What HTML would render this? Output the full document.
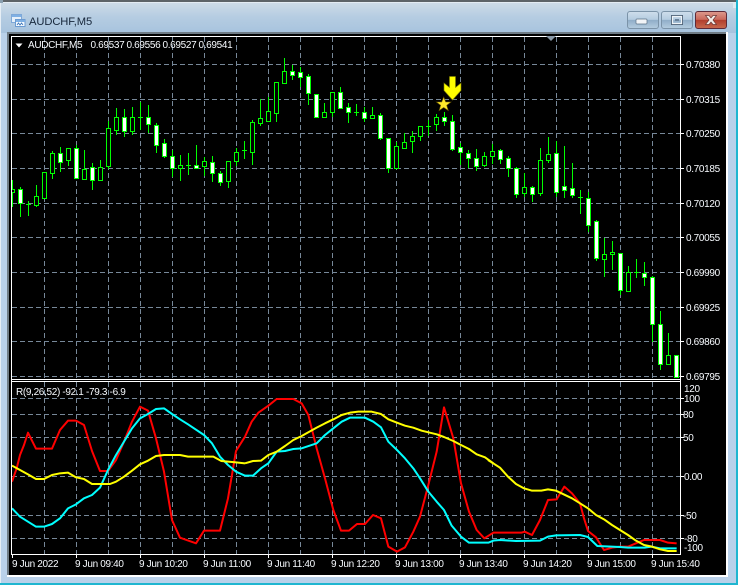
<!DOCTYPE html>
<html><head><meta charset="utf-8"><style>
html,body{margin:0;padding:0;background:#1fb6d0;overflow:hidden}
svg{display:block}
text{font-family:"Liberation Sans",sans-serif;font-size:10px;letter-spacing:-.33px;fill:#f8fbff}
</style></head><body>
<svg width="738" height="585" viewBox="0 0 738 585" xmlns="http://www.w3.org/2000/svg">
<defs>
<linearGradient id="tb" x1="0" y1="0" x2="0" y2="1"><stop offset="0" stop-color="#d3dfe9"/><stop offset=".5" stop-color="#b6cde2"/><stop offset="1" stop-color="#a7c3de"/></linearGradient>
<linearGradient id="bt" x1="0" y1="0" x2="0" y2="1"><stop offset="0" stop-color="#cfdeec"/><stop offset=".48" stop-color="#b4cce0"/><stop offset=".5" stop-color="#8fadc8"/><stop offset="1" stop-color="#b5cde0"/></linearGradient>
<linearGradient id="cl" x1="0" y1="0" x2="0" y2="1"><stop offset="0" stop-color="#dd9a8e"/><stop offset=".48" stop-color="#c9685a"/><stop offset=".5" stop-color="#b13d2c"/><stop offset="1" stop-color="#c86a4e"/></linearGradient>
<clipPath id="main"><rect x="12" y="37" width="668" height="342"/></clipPath>
<clipPath id="ind"><rect x="12" y="382" width="668" height="172"/></clipPath>
</defs>

<!-- window frame -->
<rect width="738" height="585" fill="#1fb6d0"/>
<rect x="0" y="0" width="736" height="583" fill="#b9d1ea"/>
<rect x="0" y="0" width="738" height="33" fill="url(#tb)"/>
<rect x="0" y="0" width="738" height="2" fill="#5e6468"/>
<rect x="0" y="2" width="738" height="1" fill="#e4ecf3"/>
<rect x="0" y="3" width="1" height="580" fill="#e6eef5"/>
<rect x="0" y="0" width="3" height="3" fill="#8aa0b0"/>
<rect x="736" y="0" width="2" height="585" fill="#1fb6d0"/>
<rect x="733" y="3" width="3" height="5" fill="#dfe9f1"/>

<!-- title icon -->
<rect x="11.500" y="14.500" width="10" height="8" fill="#e6f0fa" stroke="#7ea8d8"/>
<rect x="12" y="15" width="9" height="2" fill="#7fb0e4"/>
<rect x="15.500" y="19.500" width="9.500" height="7" fill="#f6fafd" stroke="#6b9bd2"/>
<rect x="16" y="20" width="9" height="2" fill="#7fb0e4"/>
<path d="M17 25l1.500-2 1.500 2 1.500-2 1.500 2" fill="none" stroke="#3f78bd" stroke-width=".9"/>
<text x="29" y="25" style="font-size:11.200px;letter-spacing:-.1px;fill:#16263a">AUDCHF,M5</text>

<!-- buttons -->
<rect x="627.500" y="11.500" width="31" height="17" rx="2.500" fill="url(#bt)" stroke="#7b93a8"/>
<rect x="636" y="19" width="11" height="5" rx="1" fill="#f1f4f7" stroke="#5b7186" stroke-width=".7"/>
<rect x="661.500" y="11.500" width="31" height="17" rx="2.500" fill="url(#bt)" stroke="#7b93a8"/>
<rect x="671.500" y="15.500" width="11" height="9" fill="none" stroke="#4e6277" stroke-width="1"/>
<rect x="672.500" y="16.500" width="9" height="7" fill="none" stroke="#eef3f7" stroke-width="1.200"/>
<rect x="675" y="19" width="4" height="2" fill="#6a8199"/>
<rect x="695.500" y="11.500" width="31" height="17" rx="2.500" fill="url(#cl)" stroke="#5e2a38"/>
<path d="M705.500 15.500h3.500l2 2.500 2-2.500h3.500l-3.500 4.500 3.500 4.500h-3.500l-2-2.500-2 2.500h-3.500l3.500-4.500z" fill="#f3ede9" stroke="#6c3a36" stroke-width=".7"/>

<!-- chart well -->
<rect x="7" y="32" width="721" height="545" fill="#fff"/>
<rect x="7" y="32" width="719" height="543" fill="#6f7c86"/>
<rect x="9" y="34" width="717" height="541" fill="#000"/>
<path d="M11.500 36.500H680.500V554.500H11.500zM11.500 379.500H680.500M11.500 381.500H680.500" fill="none" stroke="#fff" stroke-width="1" shape-rendering="crispEdges"/>

<!-- grid -->
<g fill="none" stroke="#778899" stroke-width="1" stroke-dasharray="5 3" shape-rendering="crispEdges">
<path d="M12 64.500H680M12 99.500H680M12 133.500H680M12 168.500H680M12 203.500H680M12 237.500H680M12 272.500H680M12 307.500H680M12 341.500H680M12 376.500H680"/>
<path d="M12 398.500H680M12 414.500H680M12 437.500H680M12 476.500H680M12 515.500H680M12 538.500H680"/>
<path d="M44.500 37V379M76.500 37V379M108.500 37V379M140.500 37V379M172.500 37V379M204.500 37V379M236.500 37V379M268.500 37V379M300.500 37V379M332.500 37V379M364.500 37V379M396.500 37V379M428.500 37V379M460.500 37V379M492.500 37V379M524.500 37V379M556.500 37V379M588.500 37V379M620.500 37V379M652.500 37V379"/>
<path d="M44.500 382V554M76.500 382V554M108.500 382V554M140.500 382V554M172.500 382V554M204.500 382V554M236.500 382V554M268.500 382V554M300.500 382V554M332.500 382V554M364.500 382V554M396.500 382V554M428.500 382V554M460.500 382V554M492.500 382V554M524.500 382V554M556.500 382V554M588.500 382V554M620.500 382V554M652.500 382V554"/>
</g>
<path d="M546 36h10l-5 5z" fill="#8a99a8"/>

<!-- candles -->
<g clip-path="url(#main)" shape-rendering="crispEdges" stroke="#00ff00" stroke-width="1">
<path fill="none" d="M12.500 180V207M20.500 187V217M28.500 201V216M36.500 185V207M44.500 172V198M52.500 151V179M60.500 147V172M68.500 148V166M76.500 145V179M84.500 150V179M92.500 163V190M100.500 160V180M108.500 121V169M116.500 108V135M124.500 109V137M132.500 107V135M140.500 102V130M148.500 105V133M156.500 123V153M164.500 139V158M172.500 150V177M180.500 155V181M188.500 153V175M196.500 145V165M204.500 157V176M212.500 156V182M220.500 171V186M228.500 161V188M236.500 148V166M244.500 141V159M252.500 120V165M260.500 99V126M268.500 97V122M276.500 82V122M284.500 58V83M292.500 65V80M300.500 67V87M308.500 74V105M324.500 103V118M332.500 92V117M340.500 87V109M348.500 103V123M356.500 104V116M364.500 107V122M372.500 107V119M380.500 113V140M388.500 138V173M396.500 142V168M404.500 133V149M412.500 131V153M420.500 126V141M428.500 120V136M436.500 114V131M444.500 112V126M452.500 115V151M460.500 143V165M468.500 150V168M476.500 149V171M484.500 152V167M492.500 144V164M500.500 149V164M508.500 156V177M516.500 167V198M524.500 173V197M532.500 186V202M540.500 148V196M548.500 137V163M556.500 141V197M564.500 146V198M572.500 163V198M580.500 190V214M588.500 192V232M596.500 220V261M604.500 238V277M612.500 241V270M620.500 253V295M628.500 266V292M636.500 259V278M644.500 262V286M652.500 276V342M660.500 311V370M668.500 333V364M26 204.500h5M138 117.500h5M186 165.500h5M242 150.500h5M354 112.500h5M426 126.500h5M578 197.500h5M634 272.500h5"/>
<path fill="#000" d="M10.500 189.500h4v3h-4zM34.500 196.500h4v9h-4zM42.500 172.500h4v26h-4zM50.500 153.500h4v20h-4zM66.500 148.500h4v12h-4zM82.500 169.500h4v10h-4zM98.500 167.500h4v13h-4zM106.500 128.500h4v38h-4zM114.500 117.500h4v13h-4zM130.500 117.500h4v14h-4zM178.500 165.500h4v3h-4zM202.500 161.500h4v5h-4zM226.500 161.500h4v20h-4zM234.500 152.500h4v9h-4zM250.500 122.500h4v30h-4zM258.500 118.500h4v5h-4zM266.500 111.500h4v10h-4zM274.500 82.500h4v31h-4zM282.500 71.500h4v12h-4zM322.500 112.500h4v5h-4zM330.500 92.500h4v20h-4zM370.500 115.500h4v3h-4zM394.500 146.500h4v22h-4zM402.500 142.500h4v6h-4zM410.500 136.500h4v5h-4zM418.500 126.500h4v10h-4zM434.500 117.500h4v7h-4zM482.500 156.500h4v9h-4zM490.500 151.500h4v5h-4zM522.500 187.500h4v6h-4zM538.500 160.500h4v33h-4zM546.500 154.500h4v6h-4zM602.500 254.500h4v5h-4zM610.500 252.500h4v2h-4zM626.500 272.500h4v19h-4zM666.500 355.500h4v9h-4z"/>
<path fill="#fff" d="M18.500 189.500h4v14h-4zM58.500 153.500h4v9h-4zM74.500 148.500h4v30h-4zM90.500 167.500h4v13h-4zM122.500 117.500h4v14h-4zM146.500 117.500h4v7h-4zM154.500 125.500h4v20h-4zM162.500 143.500h4v13h-4zM170.500 156.500h4v12h-4zM194.500 165.500h4v3h-4zM210.500 162.500h4v11h-4zM218.500 173.500h4v9h-4zM290.500 71.500h4v4h-4zM298.500 72.500h4v5h-4zM306.500 76.500h4v17h-4zM314.500 94.500h4v23h-4zM338.500 92.500h4v16h-4zM346.500 107.500h4v5h-4zM362.500 112.500h4v6h-4zM378.500 115.500h4v23h-4zM386.500 138.500h4v30h-4zM442.500 117.500h4v4h-4zM450.500 121.500h4v28h-4zM458.500 147.500h4v5h-4zM466.500 153.500h4v5h-4zM474.500 158.500h4v8h-4zM498.500 150.500h4v9h-4zM506.500 158.500h4v10h-4zM514.500 168.500h4v26h-4zM530.500 187.500h4v7h-4zM554.500 153.500h4v39h-4zM562.500 186.500h4v4h-4zM570.500 188.500h4v7h-4zM586.500 198.500h4v27h-4zM594.500 221.500h4v37h-4zM618.500 253.500h4v37h-4zM642.500 273.500h4v4h-4zM650.500 277.500h4v47h-4zM658.500 324.500h4v40h-4zM674.500 355.500h4v22h-4z"/>
</g>

<!-- arrow and star -->
<path d="M449.500 76.500h6v11l5.500-4.500v7.500l-8.500 9.500-8.500-9.500v-7.500l5.500 4.500z" fill="#ffff00" stroke="#7f7f00" stroke-width=".6"/>
<path d="M443.700 97l2 5h5.300l-4.300 3.300 1.600 5.200-4.600-3-4.600 3 1.600-5.200-4.300-3.300h5.300z" fill="#ffe92a" stroke="#6e5a00" stroke-width=".6"/>

<!-- indicator lines -->
<g clip-path="url(#ind)" fill="none" stroke-width="2" stroke-linejoin="round">
<g transform="translate(0 375) scale(.33333)" stroke-width="6">
<polyline stroke="#ff0000" points="36,320 50,280 60,240 72,210 84,173 108,221 156,221 180,165 204,137 228,137 252,150 276,228 300,288 324,288 348,255 372,200 396,140 420,95 444,107 468,190 492,290 516,435 540,488 588,505 612,467 660,467 684,370 708,228 735,185"/>
</g>
<g transform="translate(245 375) scale(.33333)" stroke-width="6">
<polyline stroke="#ff0000" points="0,185 20,140 40,113 70,92 95,72 145,72 170,85 190,120 215,220 240,310 265,405 288,467 312,467 336,447 360,447 384,420 408,430 430,515 456,530 480,517 505,470 525,425 550,330 575,230 597,97 625,190 648,325 672,410 695,465 718,490 745,473"/>
</g>
<g transform="translate(488 375) scale(.33333)" stroke-width="6">
<polyline stroke="#ff0000" points="14,473 100,473 110,470 132,480 156,435 180,375 206,373 229,335 252,355 276,385 288,430 300,468 324,487 348,525 372,518 396,515 420,515 444,505 468,495 516,495 540,503 566,505"/>
</g>
<g transform="translate(0 375) scale(.33333)" stroke-width="6">
<polyline stroke="#00ffff" points="36,400 60,425 108,455 132,455 156,447 180,430 204,400 228,388 252,370 276,360 300,338 324,285 348,240 372,200 396,160 420,130 444,117 468,102 492,100 516,117 540,133 564,148 612,180 636,205 660,245 684,270 708,290 735,302"/>
</g>
<g transform="translate(245 375) scale(.33333)" stroke-width="6">
<polyline stroke="#00ffff" points="0,302 24,302 48,280 70,265 95,230 120,228 145,222 170,220 215,205 240,180 265,160 290,140 315,128 360,128 385,140 408,157 430,200 456,225 480,250 505,280 525,310 550,350 575,380 597,405 620,452 648,485 672,503 730,503 745,497"/>
</g>
<g transform="translate(488 375) scale(.33333)" stroke-width="6">
<polyline stroke="#00ffff" points="14,497 36,495 84,498 156,497 180,485 204,481 276,480 300,486 328,513 396,516 420,518 470,518 490,515 516,520 566,520"/>
</g>
<g transform="translate(0 375) scale(.33333)" stroke-width="6">
<polyline stroke="#ffff00" points="36,272 60,285 84,298 108,312 132,312 156,300 180,295 204,293 228,307 252,312 276,327 330,327 348,320 372,305 396,287 420,268 444,257 468,243 492,240 540,240 564,245 640,245 664,258 708,262 735,265"/>
</g>
<g transform="translate(245 375) scale(.33333)" stroke-width="6">
<polyline stroke="#ffff00" points="0,265 24,258 48,257 70,240 95,230 120,213 145,195 170,183 215,158 240,145 265,133 290,120 315,113 340,110 380,110 408,117 430,133 456,143 480,152 505,158 530,167 550,172 575,178 597,186 625,198 648,210 672,222 695,238 720,247 745,265"/>
</g>
<g transform="translate(488 375) scale(.33333)" stroke-width="6">
<polyline stroke="#ffff00" points="0,255 36,278 60,305 84,327 108,340 132,347 160,347 180,343 204,347 252,370 276,385 300,400 324,420 348,433 372,450 396,465 420,480 444,497 468,510 492,515 516,523 540,528 566,528"/>
</g>
</g>

<!-- ticks -->
<path d="M681 64.500h3M681 99.500h3M681 133.500h3M681 168.500h3M681 203.500h3M681 237.500h3M681 272.500h3M681 307.500h3M681 341.500h3M681 376.500h3M681 398.500h3M681 414.500h3M681 437.500h3M681 476.500h3M681 515.500h3M681 538.500h3M12.500 555v3M76.500 555v3M140.500 555v3M204.500 555v3M268.500 555v3M332.500 555v3M396.500 555v3M460.500 555v3M524.500 555v3M588.500 555v3M652.500 555v3" stroke="#fff" stroke-width="1" fill="none" shape-rendering="crispEdges"/>

<!-- header -->
<path d="M15.500 43.500h7l-3.500 4z" fill="#fff"/>
<text x="28" y="48">AUDCHF,M5</text>
<text x="90.500" y="48">0.69537</text>
<text x="126.500" y="48">0.69556</text>
<text x="162.500" y="48">0.69527</text>
<text x="198.500" y="48">0.69541</text>
<text x="16" y="395">R(9,26,52) -92.1 -79.3 -6.9</text>

<!-- prices -->
<text x="686" y="68">0.70380</text>
<text x="686" y="103">0.70315</text>
<text x="686" y="137">0.70250</text>
<text x="686" y="172">0.70185</text>
<text x="686" y="207">0.70120</text>
<text x="686" y="241">0.70055</text>
<text x="686" y="276">0.69990</text>
<text x="686" y="311">0.69925</text>
<text x="686" y="345">0.69860</text>
<text x="686" y="380">0.69795</text>
<text x="684" y="392">120</text>
<text x="684" y="402">100</text>
<text x="683" y="418">80</text>
<text x="683" y="441">50</text>
<text x="684" y="480">0.00</text>
<text x="683" y="519">-50</text>
<text x="684" y="542">-80</text>
<text x="684" y="551">-100</text>

<!-- time -->
<text x="12" y="567">9 Jun 2022</text>
<text x="75" y="567">9 Jun 09:40</text>
<text x="139" y="567">9 Jun 10:20</text>
<text x="203" y="567">9 Jun 11:00</text>
<text x="267" y="567">9 Jun 11:40</text>
<text x="331" y="567">9 Jun 12:20</text>
<text x="395" y="567">9 Jun 13:00</text>
<text x="459" y="567">9 Jun 13:40</text>
<text x="523" y="567">9 Jun 14:20</text>
<text x="587" y="567">9 Jun 15:00</text>
<text x="651" y="567">9 Jun 15:40</text>
</svg>
</body></html>
